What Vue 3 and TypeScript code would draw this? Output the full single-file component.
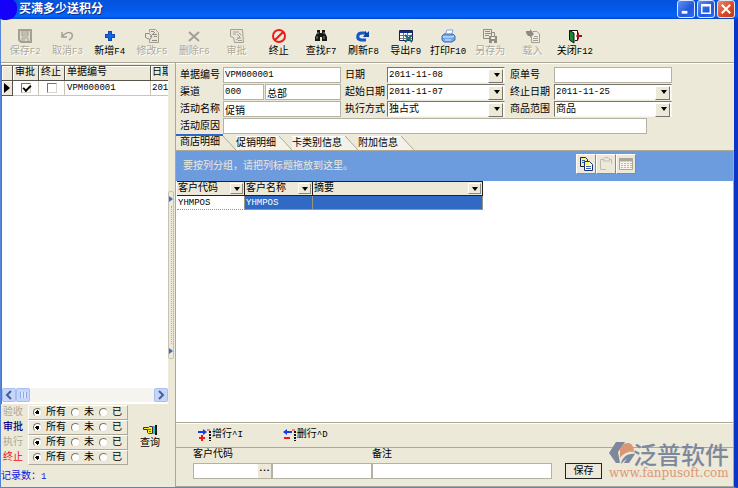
<script setup lang="ts">
import { ref } from 'vue'

interface Shape {
  d: string
  fill?: string
  stroke?: string
  width?: number
}
interface Tool {
  text: string
  key: string
  off?: boolean
  icon: Shape[]
}

const grey = '#a3a093'

const tools: Tool[] = [
  { text: '保存', key: 'F2', off: true, icon: [
    { d: 'M2 2H14V14H4L2 12Z', stroke: grey, width: 2, fill: '#dedbcd' },
    { d: 'M5 2V8H11V2M5 4H11M5 6H11M5 14V10H11V14M7 11V13', stroke: grey },
  ] },
  { text: '取消', key: 'F3', off: true, icon: [
    { d: 'M3 4V9H8M3 9C5 5 11 3 13 6C14 9 12 11 10 12', stroke: grey, width: 1.5 },
  ] },
  { text: '新增', key: 'F4', icon: [
    { d: 'M6 3H10V6H13V10H10V13H6V10H3V6H6Z', fill: '#0b4bb8' },
    { d: 'M7 4H9V7H12V9H9V12H7V9H4V7H7Z', fill: '#1766d8' },
  ] },
  { text: '修改', key: 'F5', off: true, icon: [
    { d: 'M5.5 4.5V1.5H11.5L14.5 4.5V14.5H5.5V11.5', stroke: grey, fill: '#e8e5d8' },
    { d: 'M7 3.5H10M9 6.5H13M10 8.5H13M8 12.5H13M1.5 5.5H5L8 8L6 11.5L1.5 9.5ZM6 9L11 4', stroke: '#8f8c80' },
  ] },
  { text: '删除', key: 'F6', off: true, icon: [
    { d: 'M3 4L13 13M13 4L3 13', stroke: grey, width: 2 },
  ] },
  { text: '审批', key: '', off: true, icon: [
    { d: 'M1.5 1.5H13.5L14.5 14.5H5.5L4.5 9.5L1.5 8.5Z', stroke: grey, fill: '#e8e5d8' },
    { d: 'M4 4H10M4 6H7M8 6L11 9L7 12M10 5L12 7M8 10H12M9 12.5H13', stroke: grey },
  ] },
  { text: '终止', key: '', icon: [
    { d: 'M8 2A6 6 0 1 0 8 14A6 6 0 1 0 8 2M12 4L4 12', stroke: '#f31818', width: 2 },
  ] },
  { text: '查找', key: 'F7', icon: [
    { d: 'M4 2H7V5H9V2H12V5L14 9V13H9V9H7V13H2V9L4 5Z', fill: '#171717' },
    { d: 'M5 4V6M11 4V6M4 8V11M11 8V11', stroke: '#8a8a80' },
  ] },
  { text: '刷新', key: 'F8', icon: [
    { d: 'M11 12H6C1 11 2 5 7 5H11', stroke: '#1558c5', width: 3 },
    { d: 'M8 9H14V3L12 5L10 3V6Z', fill: '#0b43a8' },
  ] },
  { text: '导出', key: 'F9', icon: [
    { d: 'M1.5 2.5H14.5V12.5H1.5Z', fill: '#fff', stroke: '#17214f' },
    { d: 'M2 3H14V5H2Z', fill: '#142b93' },
    { d: 'M2 7.5H14M2 10.5H14M5.5 5V12M9.5 5V12', stroke: '#777' },
    { d: 'M7 7L14 14M14 7L7 14', stroke: '#08757c', width: 2 },
  ] },
  { text: '打印', key: 'F10', icon: [
    { d: 'M5 7L7 2H13L11 8Z', fill: '#fff', stroke: '#7da7db' },
    { d: 'M2 8L4 6H13L15 8V12L12 14H4L2 12Z', fill: '#70a5e8', stroke: '#3971b9' },
    { d: 'M3 9H12L14 8M5 12H11', stroke: '#e6f2ff' },
  ] },
  { text: '另存为', key: '', off: true, icon: [
    { d: 'M1.5 1.5H9.5V10.5H1.5ZM3 3.5H8M3 5.5H10M3 7.5H7M9 4.5H12.5V8', stroke: '#8f8c80' },
    { d: 'M7 8H15V15H7Z', fill: '#8f8c80' },
    { d: 'M9 9H13V11H9ZM10 13H12V15H10Z', fill: '#eeeadd' },
  ] },
  { text: '载入', key: '', off: true, icon: [
    { d: 'M7.5 3.5H12L14.5 6V14.5H6.5V9', fill: '#eeeadd', stroke: grey },
    { d: 'M9 8.5H13M8 10.5H13M8 12.5H13', stroke: grey },
    { d: 'M1 3H5V1L9 6L5 10V8H3L1 5Z', fill: '#8d8a80' },
  ] },
  { text: '关闭', key: 'F12', icon: [
    { d: 'M2.5 2.5H10.5V12.5H8', stroke: '#111', fill: '#fff' },
    { d: 'M2.5 2.5L7 5V15L2.5 12Z', fill: '#138a31', stroke: '#111' },
    { d: 'M9 8L12 4V7H15V9H12V12Z', fill: '#a41416' },
  ] },
]

const tabs = ['商店明细', '促销明细', '卡类别信息', '附加信息']
const activeTab = ref(0)

const filters = ref([
  { name: '验收', tone: 'dim', value: 0 },
  { name: '审批', tone: 'navy', value: 0 },
  { name: '执行', tone: 'dim', value: 0 },
  { name: '终止', tone: 'red', value: 0 },
])
const choices = ['所有', '未', '已']

const approved = ref(true)
const ended = ref(false)
</script>

<template>
  <div class="window">
    <header class="title">
      <span class="blob"></span>
      <h1>买满多少送积分</h1>
      <div class="caption">
        <button type="button" aria-label="最小化">
          <svg viewBox="0 0 17 17"><path d="M4 12H10" stroke="#fff" stroke-width="3" /></svg>
        </button>
        <button type="button" aria-label="最大化">
          <svg viewBox="0 0 17 17"><path d="M4 4H13V13H4ZM4 5H13" stroke="#fff" fill="none" stroke-width="1.5" /></svg>
        </button>
        <button type="button" class="close" aria-label="关闭">
          <svg viewBox="0 0 17 17"><path d="M4 4L13 13M13 4L4 13" stroke="#fff" stroke-width="2.2" /></svg>
        </button>
      </div>
    </header>

    <div class="client">
      <nav class="toolbar">
        <button v-for="t in tools" :key="t.text" type="button" :disabled="t.off">
          <svg viewBox="0 0 16 16">
            <path v-for="(s, i) in t.icon" :key="i" :d="s.d" :fill="s.fill ?? 'none'" :stroke="s.stroke ?? 'none'" :stroke-width="s.width ?? 1" />
          </svg>
          <span>{{ t.text }}<span class="en">{{ t.key }}</span></span>
        </button>
      </nav>

      <div class="body">
        <aside class="side">
          <div class="list">
            <div class="rows">
              <table class="orders">
                <colgroup><col class="c-mark" /><col class="c-check" /><col class="c-check" /><col class="c-no" /><col /></colgroup>
                <thead>
                  <tr><th></th><th>审批</th><th>终止</th><th>单据编号</th><th>日期</th></tr>
                </thead>
                <tbody>
                  <tr>
                    <td class="mark"><svg viewBox="0 0 8 10"><path d="M1 0L7 5L1 10Z" fill="#000" /></svg></td>
                    <td class="check"><input v-model="approved" type="checkbox" aria-label="审批" /></td>
                    <td class="check"><input v-model="ended" type="checkbox" aria-label="终止" /></td>
                    <td class="en">VPM000001</td>
                    <td class="en">201</td>
                  </tr>
                </tbody>
              </table>
            </div>
            <div class="hscroll">
              <button type="button" aria-label="向左"><svg viewBox="0 0 12 12"><path d="M8 2L4 6L8 10" /></svg></button>
              <span class="thumb"></span>
              <button type="button" class="end" aria-label="向右"><svg viewBox="0 0 12 12"><path d="M4 2L8 6L4 10" /></svg></button>
            </div>
          </div>
          <div class="lower">
            <div class="filters">
              <div v-for="(f, i) in filters" :key="i" class="filter">
                <span :class="f.tone">{{ f.name }}</span>
                <div class="choices" role="radiogroup" :aria-label="f.name">
                  <label v-for="(c, n) in choices" :key="c">
                    <input v-model="f.value" type="radio" :name="'filter' + i" :value="n" />{{ c }}
                  </label>
                </div>
              </div>
            </div>
            <button type="button" class="query">
              <svg viewBox="0 0 14 10">
                <path d="M0.5 2.5H5.5L6.5 1.5H9.5V8.5H5.5L4.5 7.5V4.5H0.5Z" fill="#ffee20" stroke="#333" />
                <path d="M5 4.5H8M6 6.5H8" stroke="#6b6310" />
                <path d="M10 1H12V9H10Z" fill="#21c8d2" /><path d="M12 0H14V10H12Z" fill="#111" />
              </svg>
              查询
            </button>
          </div>
          <p class="count">记录数：<span class="en">1</span></p>
        </aside>

        <div class="splitter">
          <div class="grip">
            <svg viewBox="0 0 4 6"><path d="M0 0L4 3L0 6Z" fill="#3470c8" /></svg>
            <i></i>
            <svg viewBox="0 0 4 6"><path d="M0 0L4 3L0 6Z" fill="#3470c8" /></svg>
          </div>
        </div>

        <main class="detail">
          <form class="form" @submit.prevent>
            <label for="no">单据编号</label>
            <input id="no" class="en" value="VPM000001" />
            <label for="day">日期</label>
            <span class="combo"><select id="day" class="en"><option>2011-11-08</option></select></span>
            <label for="src">原单号</label>
            <input id="src" class="en" />

            <label for="ch">渠道</label>
            <span class="pair"><input id="ch" class="en" value="000" /><input aria-label="渠道名称" value="总部" /></span>
            <label for="from">起始日期</label>
            <span class="combo"><select id="from" class="en"><option>2011-11-07</option></select></span>
            <label for="to">终止日期</label>
            <span class="combo"><select id="to" class="en"><option>2011-11-25</option></select></span>

            <label for="act">活动名称</label>
            <input id="act" value="促销" />
            <label for="mode">执行方式</label>
            <span class="combo"><select id="mode"><option>独占式</option></select></span>
            <label for="scope">商品范围</label>
            <span class="combo"><select id="scope"><option>商品</option></select></span>

            <label for="why">活动原因</label>
            <input id="why" class="wide" />
          </form>

          <div class="tabs" role="tablist">
            <button v-for="(t, i) in tabs" :key="t" type="button" role="tab" :aria-selected="i === activeTab" :class="{ on: i === activeTab }" @click="activeTab = i">
              <span>{{ t }}</span>
              <svg viewBox="0 0 13 14"><path class="face" d="M0 0L13 14H0Z" /><path class="edge" d="M0 0L13 14" /></svg>
            </button>
          </div>

          <section class="page">
            <div class="groupbar">
              <span>要按列分组，请把列标题拖放到这里。</span>
              <div class="gbtns">
                <button type="button" aria-label="复制">
                  <svg viewBox="0 0 16 16">
                    <path d="M2.5 1.5H7.5L9.5 3.5V10.5H2.5Z" fill="#fff36a" stroke="#16204a" />
                    <path d="M6.5 5.5H11.5L14.5 8.5V14.5H6.5Z" fill="#fff" stroke="#16307c" />
                    <path d="M7 6H11V9H7Z" fill="#fff36a" />
                    <path d="M8 10.5H13M8 12.5H13M4 4.5H7M4 6.5H6" stroke="#3560b5" />
                  </svg>
                </button>
                <button type="button" aria-label="粘贴">
                  <svg viewBox="0 0 16 16"><path d="M5 3.5H2.5V13.5H8M11 3.5H13.5V8M5.5 5V3L7 1.5H10L11.5 3V5Z" fill="none" stroke="#bfbcae" /></svg>
                </button>
                <button type="button" aria-label="表格">
                  <svg viewBox="0 0 16 16"><path d="M1.5 2.5H14.5V13.5H1.5Z" fill="#f7f5ec" stroke="#aaa79a" /><path d="M1 4H15" stroke="#aaa79a" stroke-width="3" /><path d="M3 7.5H14M3 9.5H14M3 11.5H14" stroke="#bbb8aa" stroke-dasharray="2 1" /></svg>
                </button>
              </div>
            </div>
            <div class="gridarea">
              <table class="shops">
                <colgroup><col class="s-code" /><col class="s-code" /><col class="s-memo" /></colgroup>
                <thead>
                  <tr>
                    <th v-for="h in ['客户代码', '客户名称', '摘要']" :key="h"><div>{{ h }}<button type="button" :aria-label="h + '筛选'"></button></div></th>
                  </tr>
                </thead>
                <tbody>
                  <tr><td class="en cell">YHMPOS</td><td class="en">YHMPOS</td><td></td></tr>
                </tbody>
              </table>
            </div>
            <div class="rowtools">
              <button type="button">
                <svg viewBox="0 0 14 12"><path d="M0 2H5V0L9 3L5 6V4H0Z" fill="#1838f5" /><path d="M1 9H7M4 6V12" stroke="#f01818" stroke-width="2" /><path d="M9 1H12" stroke="#f01818" /><path d="M12 2V12" stroke="#111" stroke-width="2" stroke-dasharray="2 1" /></svg>
                增行<span class="en">^I</span>
              </button>
              <button type="button">
                <svg viewBox="0 0 14 12"><path d="M9 2H4V0L0 3L4 6V4H9Z" fill="#1838f5" /><path d="M1 9H7" stroke="#f01818" stroke-width="2" /><path d="M9 1H12" stroke="#f01818" /><path d="M12 2V12" stroke="#111" stroke-width="2" stroke-dasharray="2 1" /></svg>
                删行<span class="en">^D</span>
              </button>
            </div>
          </section>

          <form class="entry" @submit.prevent>
            <label for="cust">客户代码</label>
            <label for="memo" class="memo-label">备注</label>
            <span class="lookup"><input id="cust" /><button type="button" aria-label="选择客户">•••</button></span>
            <input aria-label="客户名称" />
            <input id="memo" />
            <button type="submit" class="save">保存</button>
          </form>

          <a class="brand" href="#" aria-label="泛普软件">
            <svg viewBox="0 0 27 24">
              <path d="M7 1H16L9 11L11 22H7L0 12Z" fill="#7d889c" />
              <path d="M11 12C10 4 17 0 22 3C25 6 25 9 25 11C19 10 14 13 11 17Z" fill="#db9674" />
              <path d="M12 23C13 16 19 12 26 13L20 22H15L18 17Z" fill="#7d889c" />
            </svg>
            <strong>泛普软件</strong>
            <em>www.fanpusoft.com</em>
          </a>
        </main>
      </div>
    </div>
  </div>
</template>

<style>
body {
  margin: 0;
}
</style>

<style scoped>
* {
  box-sizing: border-box;
}
.window {
  display: flex;
  flex-direction: column;
  height: 100vh;
  background: #ece9d8;
  color: #000;
  font: 10px/14px "Liberation Mono", "Noto Sans CJK SC", sans-serif;
}
button, input, select {
  margin: 0;
  padding: 0;
  border: 0;
  border-radius: 0;
  background: none;
  color: inherit;
  font: inherit;
}
svg {
  display: block;
  flex: none;
}
.en, input.en, select.en {
  font-size: 9px;
}

/* title bar */
.title {
  display: flex;
  align-items: center;
  flex: none;
  height: 19px;
  background: linear-gradient(#0452dc, #0558ea 50%, #0466fc 85%, #0244c8);
}
.blob {
  width: 17px;
  height: 21px;
  background: #1500fa;
  border-radius: 0 8px 10px 4px;
}
h1 {
  margin: 0 0 3px 2px;
  color: #fff;
  font: bold 12px/14px "Noto Sans CJK SC", sans-serif;
  text-shadow: 1px 1px #0b2f91;
}
.caption {
  display: flex;
  gap: 2px;
  margin: 0 3px 2px auto;
}
.caption button {
  width: 18px;
  height: 18px;
  border: 1px solid #dce7fb;
  border-radius: 3px;
  background: linear-gradient(135deg, #5f91f4, #2257dc 60%, #2c6cf0);
}
.caption .close {
  background: linear-gradient(135deg, #ee8a6c, #da4520 60%, #c63c16);
}
.caption svg {
  width: 16px;
  height: 16px;
}

/* frame */
.client {
  display: flex;
  flex-direction: column;
  flex: 1;
  min-height: 0;
  border: solid #5583d8;
  border-width: 0 4px 1px 1px;
  border-right-color: #0a35c6;
}
.toolbar {
  display: grid;
  grid-template-columns: repeat(14, 1fr);
  flex: none;
  width: 100%;
  max-width: 592px;
  height: 43px;
  margin-left: 3px;
  padding-top: 9px;
}
.toolbar button {
  display: flex;
  flex-direction: column;
  align-items: center;
  justify-content: flex-start;
  gap: 1px;
  white-space: nowrap;
}
.toolbar svg {
  width: 16px;
  height: 16px;
}
.toolbar button:disabled {
  color: #aca899;
  text-shadow: 1px 1px #fff;
}
.body {
  display: flex;
  flex: 1;
  min-height: 0;
  border-top: 1px solid #aca899;
  box-shadow: inset 0 1px #fff;
}

/* left list */
.side {
  display: flex;
  flex-direction: column;
  flex: none;
  width: 167px;
  padding-top: 2px;
}
.list {
  display: flex;
  flex-direction: column;
  flex: 1;
  min-height: 0;
  border: solid #77756a;
  border-width: 1px 0 0 1px;
  background: #fff;
}
.rows {
  flex: 1;
  overflow: hidden;
}
table {
  border-collapse: separate;
  border-spacing: 0;
  table-layout: fixed;
}
.orders {
  width: 100%;
}
.c-mark { width: 11px; }
.c-check { width: 26px; }
.c-no { width: 86px; }
.orders th, .orders td {
  height: 15px;
  padding: 0 0 0 2px;
  border: solid #c9c6b8;
  border-width: 0 1px 1px 0;
  line-height: 14px;
  overflow: hidden;
  text-align: left;
  white-space: nowrap;
}
.orders th, .orders .mark {
  border-color: #55534b;
  background: #ece9d8;
  box-shadow: inset 1px 1px #fff;
  font-weight: normal;
}
.orders .mark {
  padding-left: 1px;
}
.orders th:last-child, .orders td:last-child {
  padding-left: 1px;
  border-right: 0;
}
.mark svg {
  width: 8px;
  height: 10px;
}
.orders .check {
  padding: 0;
}
.check input {
  display: block;
  appearance: none;
  width: 10px;
  height: 10px;
  margin: 0 auto;
  border: 1px solid;
  border-color: #77756a #d8d5c8 #d8d5c8 #77756a;
}
.check input:checked::before {
  content: "";
  display: block;
  width: 6px;
  height: 3px;
  margin: 1px;
  border: solid #000;
  border-width: 0 0 2px 2px;
  transform: rotate(-45deg);
}
.hscroll {
  display: flex;
  flex: none;
  height: 14px;
  margin-bottom: 2px;
  background: #f5f4ee;
}
.hscroll button, .thumb {
  width: 14px;
  border: 1px solid #aabdf0;
  border-radius: 2px;
  background: #c6d5fc;
}
.hscroll path {
  fill: none;
  stroke: #46608e;
  stroke-width: 2;
}
.hscroll .end {
  margin-left: auto;
}
.thumb {
  background: repeating-linear-gradient(90deg, #8ca8ee 0 1px, #dbe5ff 1px 3px) center / 7px 6px no-repeat #c6d5fc;
}
.lower {
  display: flex;
  flex: none;
  padding-top: 1px;
}
.filter {
  display: flex;
  align-items: center;
  height: 15px;
  padding-left: 2px;
}
.filter > span {
  width: 25px;
}
.filter .dim { color: #aca899; }
.filter .navy { color: #00008b; font-weight: 500; }
.filter .red { color: #f01010; }
.choices {
  display: flex;
  align-items: center;
  gap: 5px;
  width: 100px;
  height: 15px;
  padding-left: 4px;
  border: 1px solid;
  border-color: #fff #aca899 #aca899 #fff;
}
.choices label {
  display: flex;
  align-items: center;
  gap: 4px;
}
.choices input {
  appearance: none;
  width: 9px;
  height: 9px;
  border: 1px solid;
  border-color: #77756a #e4e1d3 #e4e1d3 #77756a;
  border-radius: 5px;
  background: #fff;
}
.choices input:checked {
  background: radial-gradient(circle, #000 0 2px, #fff 2px);
}
.query {
  display: flex;
  flex: none;
  flex-direction: column;
  align-items: center;
  justify-content: flex-start;
  gap: 2px;
  width: 44px;
  padding-top: 20px;
}
.query svg {
  width: 14px;
  height: 10px;
}
.count {
  flex: none;
  margin: 0;
  padding: 5px 0 3px;
  color: #1414e0;
}

/* splitter */
.splitter {
  display: flex;
  flex: none;
  align-items: center;
  width: 7px;
}
.grip {
  display: flex;
  flex-direction: column;
  align-items: center;
  width: 6px;
  height: 168px;
  padding: 4px 0;
  border: 1px solid #c5c2b4;
  border-radius: 2px;
}
.grip svg {
  width: 4px;
  height: 6px;
}
.grip i {
  flex: 1;
  margin: 4px 0;
  border-left: 1px dotted #9cb0d4;
}

/* document header */
.detail {
  position: relative;
  display: flex;
  flex-direction: column;
  flex: 1;
  min-width: 0;
  border-left: 1px solid #aca899;
}
.form {
  display: grid;
  grid-template-columns: 42px 118px 44px 118px 47px 118px;
  grid-auto-rows: 16px;
  align-items: center;
  gap: 1px;
  padding: 4px 0 0 4px;
}
.form input, .form select, .entry input {
  width: 100%;
  min-width: 0;
  height: 16px;
  padding: 0 1px;
  border: 1px solid #b5b2a3;
  background: #fff;
  outline: 0;
}
.form label {
  padding-top: 2px;
  line-height: 14px;
  white-space: nowrap;
}
.form label:nth-of-type(3n + 2) {
  padding-left: 3px;
}
.form label:nth-of-type(3n) {
  padding-left: 4px;
}
.pair {
  display: grid;
  grid-template-columns: 41px 1fr;
  gap: 1px;
}
.form .wide {
  grid-column: 2 / 7;
  max-width: 424px;
}
.combo {
  position: relative;
  display: block;
}
.form .combo select {
  display: block;
  appearance: none;
  border-color: #77756a #f7f5ec #f7f5ec #77756a;
}
.form .combo select:not(.en) {
  padding-top: 1px;
}
.combo::after, .combo::before {
  content: "";
  position: absolute;
  pointer-events: none;
}
.combo::before {
  top: 2px;
  right: 2px;
  width: 13px;
  height: 12px;
  border: 1px solid;
  border-color: #fff #77756a #77756a #fff;
  background: #ece9d8;
}
.combo::after, .shops button::after {
  border: solid transparent;
  border-width: 4px 3px 0;
  border-top-color: #000;
}
.combo::after {
  top: 6px;
  right: 5px;
}

/* tabs */
.tabs {
  display: flex;
  flex: none;
  height: 16px;
}
.tabs button {
  display: flex;
  align-items: flex-end;
  height: 16px;
}
.tabs button span {
  height: 14px;
  padding-right: 3px;
  border-top: 1px solid #fff;
  background: #f4f2e8;
}
.tabs svg {
  width: 13px;
  height: 14px;
}
.face { fill: #f4f2e8; }
.edge { stroke: #aca899; }
.tabs .on span {
  height: 16px;
  padding: 0 3px 0 4px;
  border-top: 2px solid #2f67c4;
  background: #ece9d8;
}
.on .face { fill: #ece9d8; }

/* grid page */
.page {
  display: flex;
  flex-direction: column;
  flex: 1;
  min-height: 0;
  border-top: 1px solid #aca899;
  border-right: 1px solid #aca899;
}
.groupbar {
  display: flex;
  align-items: center;
  justify-content: space-between;
  flex: none;
  height: 30px;
  padding: 0 97px 0 7px;
  background: #6d9cde;
  color: #ece9d8;
}
.groupbar > span {
  padding-top: 2px;
}
.gbtns {
  display: flex;
  padding-bottom: 4px;
}
.gbtns button {
  display: grid;
  place-items: center;
  width: 20px;
  height: 20px;
  border: 1px solid;
  border-color: #fff #8d8a7d #8d8a7d #fff;
  background: #ece9d8;
}
.gbtns svg {
  width: 16px;
  height: 16px;
}
.gridarea {
  flex: 1;
  min-height: 0;
  padding-left: 1px;
  background: #fff;
}
.shops {
  width: 306px;
}
.s-code { width: 68px; }
.s-memo { width: 170px; }
.shops th {
  height: 15px;
  padding: 0 1px;
  border: solid #222;
  border-width: 1px 1px 1px 0;
  background: #ece9d8;
  font-weight: normal;
}
.shops th div {
  display: flex;
  align-items: center;
  justify-content: space-between;
  height: 13px;
}
.shops button {
  display: grid;
  place-items: center;
  width: 13px;
  height: 11px;
  border: 1px solid;
  border-color: #fff #8d8a7d #8d8a7d #fff;
}
.shops button::after {
  content: "";
}
.shops td {
  height: 14px;
  padding: 0 1px;
  border: solid #9a9481;
  border-width: 0 1px 1px 0;
  background: #316ac5;
  color: #fff;
  line-height: 12px;
}
.shops .cell {
  border-bottom-style: dotted;
  background: #fff;
  color: #000;
}
.rowtools {
  display: flex;
  flex: none;
  gap: 40px;
  height: 25px;
  padding-left: 22px;
  border-top: 1px solid #aca899;
  box-shadow: inset 0 1px #fff;
}
.rowtools button {
  display: flex;
  align-items: center;
}
.rowtools svg {
  width: 14px;
  height: 12px;
}

/* entry row */
.entry {
  display: grid;
  grid-template-columns: 79px 100px 180px 50px;
  grid-template-rows: 15px 16px;
  flex: none;
  height: 40px;
  padding: 0 0 8px 17px;
  border: solid #aca899;
  border-width: 1px 1px 1px 0;
}
.memo-label {
  grid-column: 3;
}
.lookup {
  display: flex;
  grid-column: 1;
  height: 16px;
  border: 1px solid #b5b2a3;
  background: #fff;
}
.entry .lookup input {
  flex: 1;
  height: 14px;
  border: 0;
}
.lookup button {
  width: 13px;
  background: #ece9d8;
  font-size: 6px;
  line-height: 12px;
}
.entry .save {
  height: 16px;
  margin-left: 13px;
  border: 1px solid #222;
  line-height: 13px;
}

/* vendor mark over the lower right corner */
.brand {
  position: absolute;
  right: 5px;
  bottom: 8px;
  display: grid;
  grid-template-columns: 24px auto;
  grid-template-rows: 26px 12px;
  color: #7d889c;
  text-decoration: none;
}
.brand svg {
  width: 27px;
  height: 24px;
}
.brand strong {
  font: 500 24px/26px "Noto Sans CJK SC", sans-serif;
}
.brand em {
  grid-column: 1 / 3;
  color: #dc9875;
  font: normal 12px/12px "DejaVu Serif", serif;
}
</style>
